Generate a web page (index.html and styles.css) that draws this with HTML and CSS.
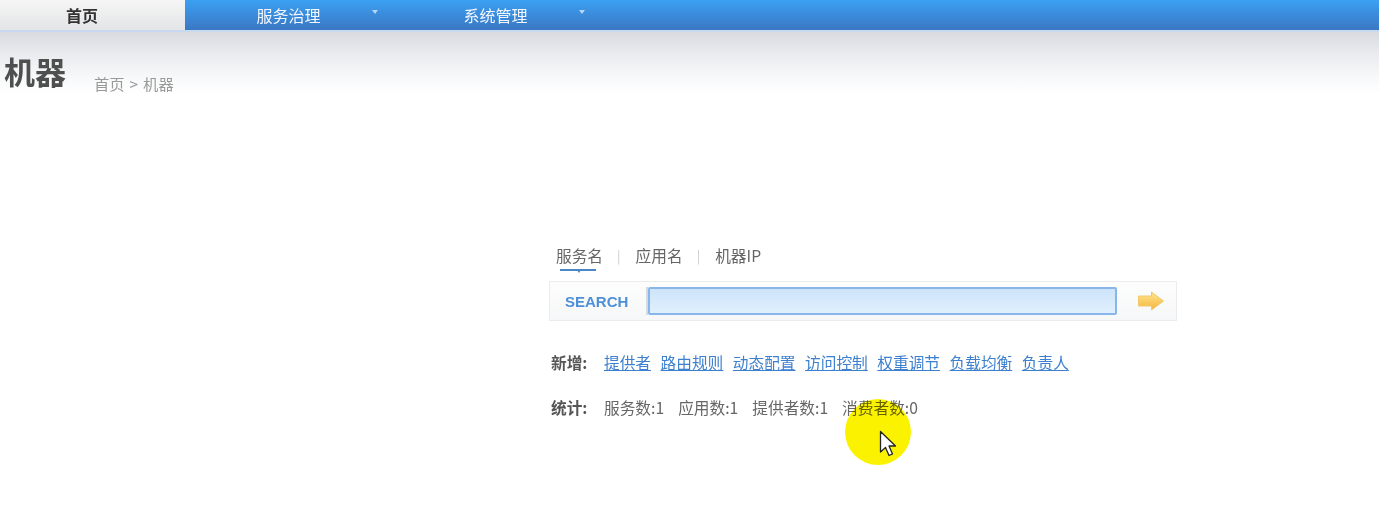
FILE: index.html
```html
<!DOCTYPE html>
<html lang="zh-CN">
<head>
<meta charset="utf-8">
<title>机器</title>
<link rel="stylesheet" href="styles.css">
</head>
<body>
<nav class="nav">
  <a class="nav-home">首页</a>
  <a class="nav-item">服务治理<span class="caret"></span></a>
  <a class="nav-item">系统管理<span class="caret"></span></a>
</nav>
<header class="head">
  <div class="title-row">
    <h1 class="title">机器</h1>
    <div class="crumb">首页<span class="gt">&gt;</span>机器</div>
  </div>
</header>
<main class="search-area">
  <div class="tabs">
    <span class="tab active">服务名</span>
    <span class="sep">|</span>
    <span class="tab">应用名</span>
    <span class="sep">|</span>
    <span class="tab">机器IP</span>
  </div>
  <div class="search-box">
    <span class="search-label">SEARCH</span>
    <span class="search-divider"></span>
    <input class="search-input" type="text">
    <span class="go">
      <svg width="28" height="20" viewBox="0 0 28 20">
        <defs>
          <linearGradient id="ag" x1="0" y1="0" x2="0" y2="1">
            <stop offset="0" stop-color="#ffe68f"/>
            <stop offset="1" stop-color="#f4b43c"/>
          </linearGradient>
        </defs>
        <path d="M1.5 5 H14.5 V1 L26.5 10 L14.5 19 V15 H1.5 Z" fill="url(#ag)" stroke="#f1c86e" stroke-width="1" stroke-linejoin="round"/>
      </svg>
    </span>
  </div>
  <div class="row add-row">
    <span class="label">新增:</span>
    <a class="lnk">提供者</a>
    <a class="lnk">路由规则</a>
    <a class="lnk">动态配置</a>
    <a class="lnk">访问控制</a>
    <a class="lnk">权重调节</a>
    <a class="lnk">负载均衡</a>
    <a class="lnk">负责人</a>
  </div>
  <div class="row stat-row">
    <span class="label">统计:</span>
    <span class="stat">服务数:1</span>
    <span class="stat">应用数:1</span>
    <span class="stat">提供者数:1</span>
    <span class="stat">消费者数:0</span>
  </div>
</main>
<div class="cursor-spot"></div>
<svg class="cursor" width="20" height="28" viewBox="0 0 20 28">
  <path d="M1.5 1.5 V22 L6.5 17.5 L10 25.5 L13.5 24 L10 16 H16.5 Z" fill="#fff" stroke="#222" stroke-width="1.3" stroke-linejoin="round"/>
</svg>
</body>
</html>
```
FILE: styles.css
```css
html, body {
  margin: 0;
  padding: 0;
  background: #fff;
}
body {
  font-family: "Noto Sans CJK SC", "Noto Sans", "Liberation Sans", sans-serif;
  color: #555;
  width: 1379px;
  height: 517px;
  overflow: hidden;
  position: relative;
}
a { cursor: pointer; }

/* top navigation */
.nav {
  display: flex;
  height: 30px;
  background: linear-gradient(#3ba0f3, #3a77c3);
}
.nav-home {
  width: 185px;
  display: flex;
  align-items: center;
  justify-content: center;
  background: linear-gradient(#f6f6f6, #e3e4e6);
  color: #333;
  font-weight: bold;
  font-size: 16px;
  padding-right: 21px;
  box-sizing: border-box;
}
.nav-item {
  width: 207px;
  position: relative;
  display: flex;
  align-items: center;
  justify-content: center;
  color: #f2f7ff;
  font-size: 16px;
}
.caret {
  position: absolute;
  right: 14px;
  top: 10px;
  width: 0;
  height: 0;
  border-left: 3px solid transparent;
  border-right: 3px solid transparent;
  border-top: 4px solid #b9d6f6;
}

/* page head */
.head {
  border-top: 2px solid #c7d8f0;
  height: 62px;
  background: linear-gradient(#d8dbe0 0%, #e9ebef 35%, #f8f9fa 75%, #fff 100%);
}
.title-row {
  display: flex;
  align-items: flex-end;
  padding: 19px 0 0 4px;
}
.title {
  margin: 0;
  font-size: 31px;
  line-height: 40px;
  font-weight: bold;
  color: #4f4f4f;
}
.crumb {
  margin-left: 28px;
  font-size: 15.3px;
  line-height: 16px;
  color: #999;
}
.gt {
  margin: 0 5px;
}

/* search */
.search-area {
  margin: 150px 0 0 549px;
  width: 628px;
}
.tabs {
  display: flex;
  align-items: flex-start;
  height: 37px;
  padding-left: 7px;
  font-size: 15.7px;
  line-height: 24px;
  color: #666;
}
.tab {
  position: relative;
}
.tab.active::after {
  content: "";
  position: absolute;
  left: 4px;
  width: 36px;
  top: 25px;
  height: 2px;
  background: #4a86c8;
}
.tab.active::before {
  content: "";
  position: absolute;
  left: 21px;
  top: 26px;
  border-left: 2px solid transparent;
  border-right: 2px solid transparent;
  border-top: 3px solid #4a86c8;
}
.sep {
  color: #ccc;
  font-size: 13px;
  margin: 0 15px 0 14px;
}
.search-box {
  height: 40px;
  box-sizing: border-box;
  border: 1px solid #ececec;
  background: linear-gradient(#fdfdfd, #f6f7f8);
  display: flex;
  align-items: center;
  padding-left: 15px;
}
.search-label {
  font-family: "Liberation Sans", Arial, sans-serif;
  font-weight: bold;
  font-size: 15px;
  color: #4d90d8;
  width: 81px;
}
.search-divider {
  width: 2px;
  height: 28px;
  background: #d6d9dd;
}
.search-input {
  width: 469px;
  height: 28px;
  box-sizing: border-box;
  border: 2px solid #88b6ea;
  border-radius: 2px;
  background: linear-gradient(#cde4fa, #e0effd);
  margin: 0;
  padding: 0;
  outline: none;
}
.go {
  margin-left: 20px;
  display: flex;
}

.row {
  display: flex;
  align-items: center;
  height: 24px;
  font-size: 15.7px;
}
.add-row { margin-top: 29px; }
.stat-row { margin-top: 21px; }
.label {
  width: 53px;
  margin-left: 2px;
  font-weight: bold;
  color: #555;
}
.lnk {
  color: #3c80cf;
  text-decoration: underline;
  margin-right: 9.5px;
}
.stat {
  color: #666;
  margin-right: 14px;
}

/* recording cursor highlight (overlay) */
.cursor-spot {
  position: absolute;
  left: 845px;
  top: 399px;
  width: 66px;
  height: 66px;
  border-radius: 50%;
  background: #fbf200;
  mix-blend-mode: multiply;
}
.cursor {
  position: absolute;
  left: 879px;
  top: 430px;
}
```
